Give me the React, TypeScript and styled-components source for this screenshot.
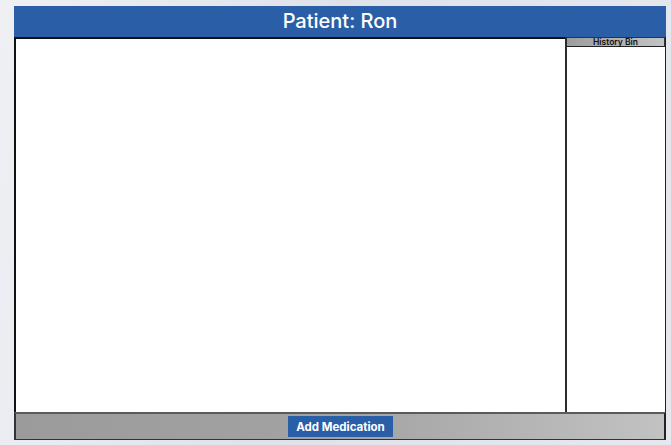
import React from "react";
import styled, { createGlobalStyle } from "styled-components";

const Global = createGlobalStyle`
  html, body { margin: 0; padding: 0; }
  body {
    width: 671px;
    height: 445px;
    overflow: hidden;
    background: linear-gradient(100deg, #eef0f4 0%, #dfe2e9 45%, #e6e8ee 100%);
    font-family: "Inter", "Open Sans", sans-serif;
  }
`;

const Frame = styled.div`
  margin: 6px 0 0 14px;
  width: 652px;
  display: flex;
  flex-direction: column;
`;

const Header = styled.header`
  height: 31px;
  background: #2a5fa8;
  color: #fff;
  display: flex;
  align-items: center;
  justify-content: center;
  font-family: "Inter", sans-serif;
  font-size: 20px;
  font-weight: 500;
  box-sizing: border-box;
  padding-bottom: 2px;
`;

const Main = styled.div`
  height: 375px;
  display: flex;
  box-sizing: border-box;
`;

const Canvas = styled.div`
  flex: 1;
  background: #fff;
  border-top: 2px solid #111;
  border-left: 2px solid #111;
`;

const Sidebar = styled.aside`
  width: 101px;
  display: flex;
  flex-direction: column;
  background: #fff;
  border-left: 2px solid #2b2b2b;
  border-right: 1px solid #222;
  box-sizing: border-box;
`;

const BinHeader = styled.div`
  height: 10px;
  box-sizing: border-box;
  background: linear-gradient(90deg, #9d9d9d 0%, #c4c4c4 100%);
  border: 1px solid #333;
  border-left: none;
  border-bottom: 1px solid #222;
  font-family: "Inter", sans-serif;
  font-size: 8.5px;
  line-height: 8px;
  font-weight: 600;
  color: #111;
  text-align: center;
`;

const BinBody = styled.div`
  flex: 1;
  background: #fff;
`;

const Footer = styled.footer`
  height: 28px;
  box-sizing: border-box;
  border-top: 2px solid #5a5a5a;
  border-left: 2px solid #333;
  border-right: 2px solid #222;
  border-bottom: 1px solid #333;
  background: linear-gradient(90deg, #9b9b9b 0%, #a3a3a3 50%, #c2c2c2 100%);
  display: flex;
  align-items: center;
  justify-content: center;
`;

const Button = styled.button`
  height: 21px;
  width: 105px;
  border: none;
  background: #2a5fa8;
  color: #fff;
  font-family: "Inter", sans-serif;
  font-weight: 700;
  font-size: 11.5px;
  padding: 0;
  cursor: pointer;
  margin-left: 1px;
`;

export default function App() {
  return (
    <>
      <Global />
      <Frame>
        <Header>Patient: Ron</Header>
        <Main>
          <Canvas />
          <Sidebar>
            <BinHeader>History Bin</BinHeader>
            <BinBody />
          </Sidebar>
        </Main>
        <Footer>
          <Button>Add Medication</Button>
        </Footer>
      </Frame>
    </>
  );
}
